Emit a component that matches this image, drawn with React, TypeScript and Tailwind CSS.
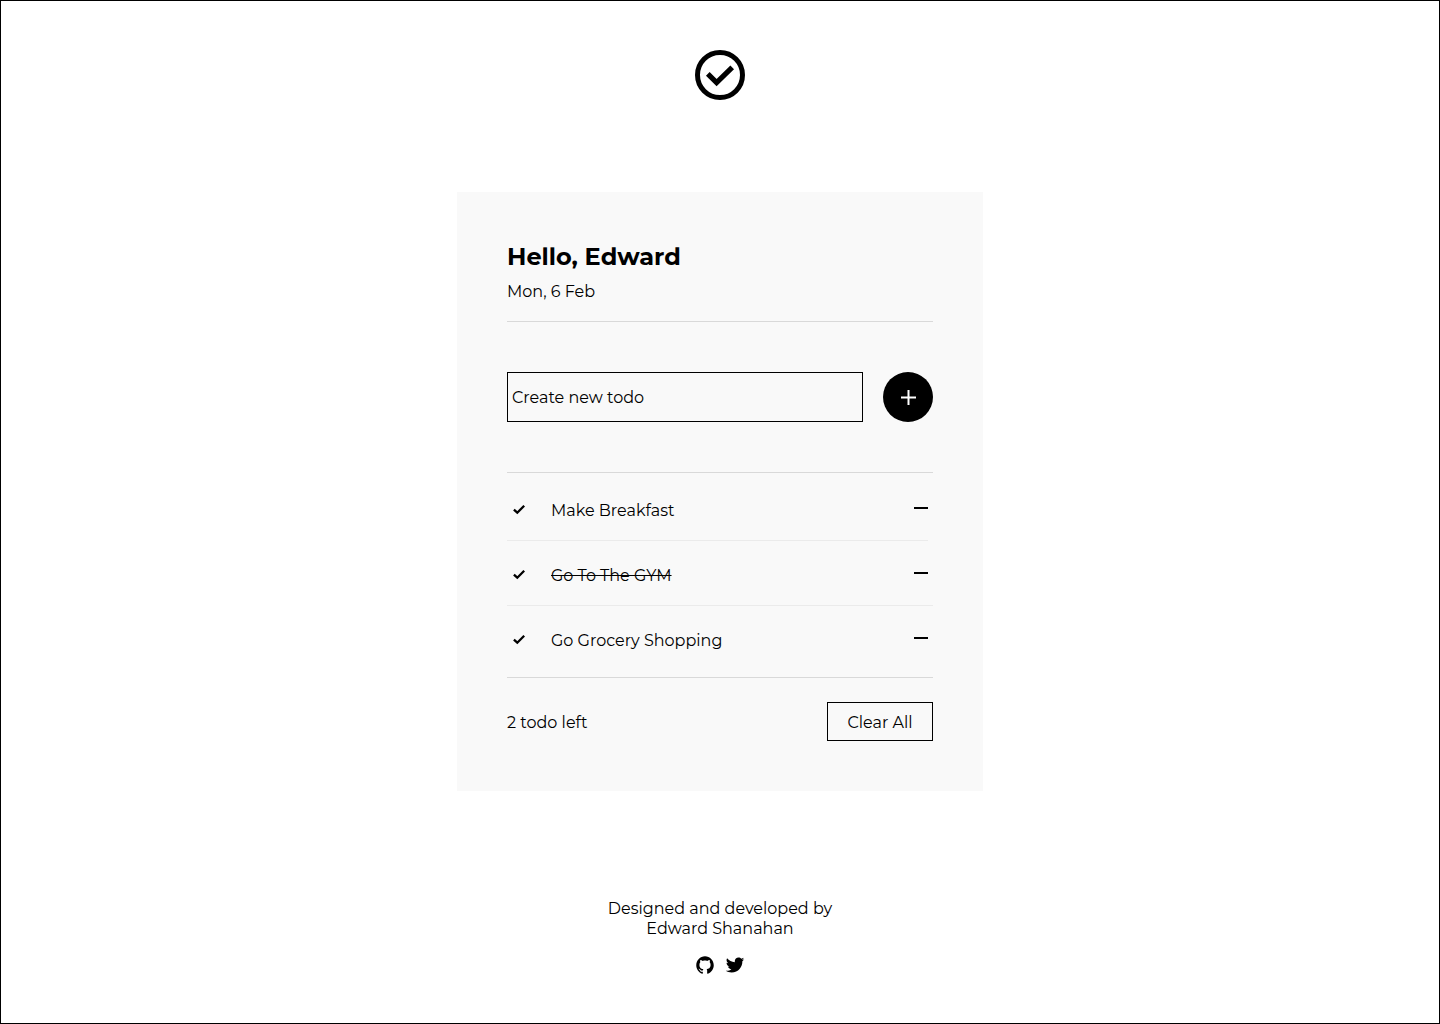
import { useState, type FormEvent } from "react";
import { IoLogoGithub, IoLogoTwitter } from "react-icons/io";

type Todo = { id: number; title: string; done: boolean };

const initialTodos: Todo[] = [
  { id: 1, title: "Make Breakfast", done: false },
  { id: 2, title: "Go To The GYM", done: true },
  { id: 3, title: "Go Grocery Shopping", done: false },
];

function Logo() {
  return (
    <svg className="size-[50px]" viewBox="0 0 50 50" fill="none" stroke="currentColor" strokeWidth="5" role="img" aria-label="Todo">
      <circle cx="25" cy="25" r="22.5" />
      <path d="M12.8 23.8l8.8 8.7L37.2 17.3" strokeWidth="5.2" />
    </svg>
  );
}

function Check() {
  return (
    <svg className="h-3 w-3" viewBox="0 0 12 12" fill="none" stroke="currentColor" strokeWidth="2.3" aria-hidden="true">
      <path d="M0.9 5.6l3.4 3.1L11.2 1.7" />
    </svg>
  );
}

function TodoRow({ todo, onToggle, onRemove }: { todo: Todo; onToggle: () => void; onRemove: () => void }) {
  return (
    <li className="flex h-[65px] items-center border-b border-[#ebebeb] first:mr-[5px] last:border-transparent not-first:pr-[5px]">
      <button type="button" onClick={onToggle} aria-label={`Toggle ${todo.title}`} className="flex h-6 w-11 items-center pt-1 pl-1.5">
        <Check />
      </button>
      <span className={todo.done ? "flex-1 pt-1.5 line-through" : "flex-1 pt-1.5"}>{todo.title}</span>
      <button type="button" onClick={onRemove} aria-label={`Remove ${todo.title}`} className="flex h-6 items-center">
        <span className="h-0.5 w-3.5 bg-black" />
      </button>
    </li>
  );
}

export default function App() {
  const [todos, setTodos] = useState(initialTodos);
  const [draft, setDraft] = useState("");

  const addTodo = (event: FormEvent) => {
    event.preventDefault();
    if (!draft.trim()) return;
    setTodos([...todos, { id: Date.now(), title: draft.trim(), done: false }]);
    setDraft("");
  };

  return (
    <div className="flex min-h-screen flex-col items-center border border-black bg-white px-4 pt-[49px] pb-10 font-['Montserrat','Inter',sans-serif] text-base leading-5 text-black">
      <header>
        <Logo />
      </header>

      <main className="mt-[92px] w-full max-w-[526px] bg-[#f9f9f9] p-[50px]">
        <div className="border-b border-[#d9d9d9] pb-[19px]">
          <h1 className="text-2xl leading-[30px] font-bold">Hello, Edward</h1>
          <p className="mt-2.5">Mon, 6 Feb</p>
        </div>

        <form onSubmit={addTodo} className="flex items-center gap-5 border-b border-[#d9d9d9] py-[50px]">
          <input
            type="text"
            aria-label="Create new todo"
            placeholder="Create new todo"
            value={draft}
            onChange={(event) => setDraft(event.target.value)}
            className="h-[50px] min-w-0 flex-1 border border-black bg-transparent px-1 outline-none placeholder:text-black"
          />
          <button type="submit" aria-label="Add todo" className="flex size-[50px] items-center justify-center rounded-full bg-black text-white">
            <svg className="size-4" viewBox="0 0 16 16" stroke="currentColor" strokeWidth="2" aria-hidden="true">
              <path d="M8.5 1v15M1 8.5h15" />
            </svg>
          </button>
        </form>

        <ul className="border-b border-[#d9d9d9] pt-[3px] pb-1.5">
          {todos.map((todo) => (
            <TodoRow
              key={todo.id}
              todo={todo}
              onToggle={() => setTodos(todos.map((t) => (t.id === todo.id ? { ...t, done: !t.done } : t)))}
              onRemove={() => setTodos(todos.filter((t) => t.id !== todo.id))}
            />
          ))}
        </ul>

        <div className="flex items-center justify-between pt-6">
          <p className="pt-0.5">{`${todos.filter((t) => !t.done).length} todo left`}</p>
          <button type="button" onClick={() => setTodos([])} className="h-[39px] w-[106px] border border-black pt-0.5">
            Clear All
          </button>
        </div>
      </main>

      <footer className="mt-[108px] flex flex-col items-center">
        <p className="text-center">
          Designed and developed by
          <br />
          Edward Shanahan
        </p>
        <div className="mt-4 flex gap-2.5">
          <a href="#github" aria-label="GitHub">
            <IoLogoGithub className="size-5" />
          </a>
          <a href="#twitter" aria-label="Twitter">
            <IoLogoTwitter className="size-5" />
          </a>
        </div>
      </footer>
    </div>
  );
}
